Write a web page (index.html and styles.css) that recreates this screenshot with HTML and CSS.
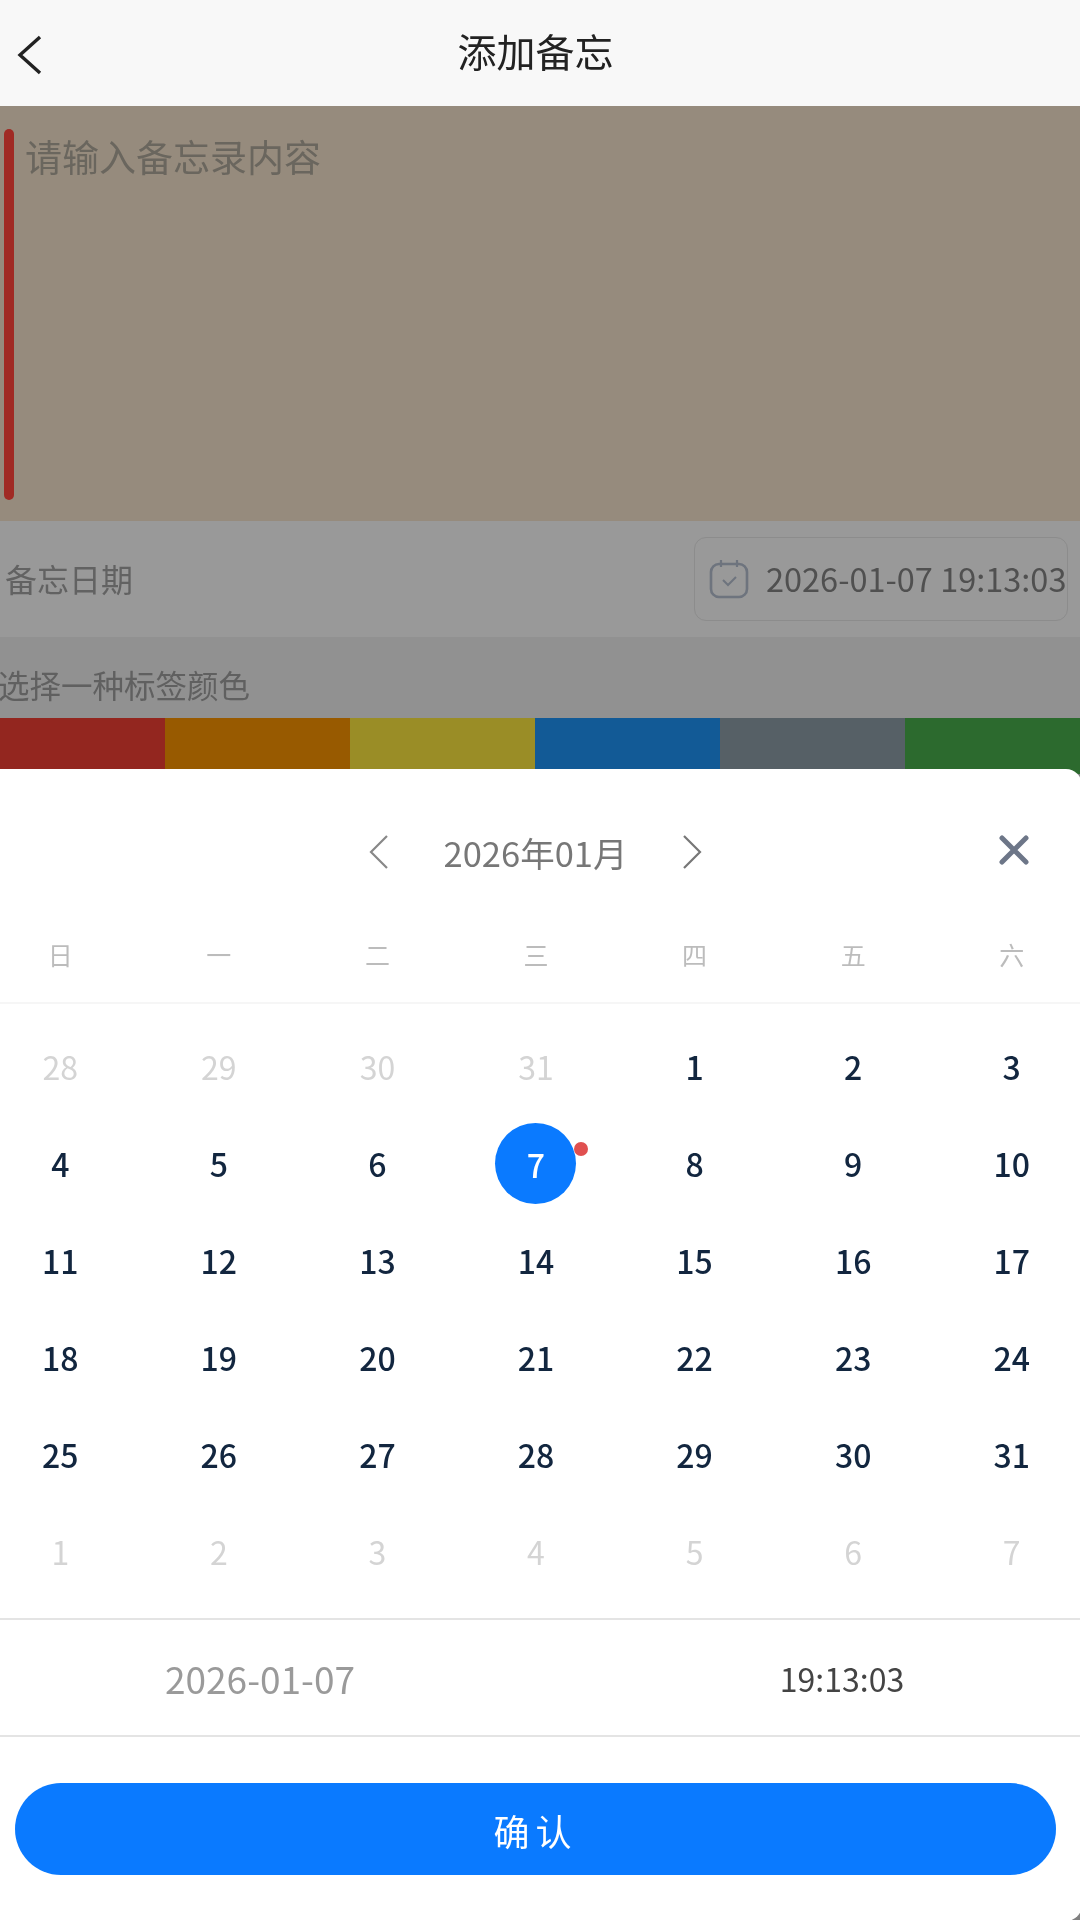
FILE: index.html
```html
<!DOCTYPE html>
<html lang="zh-CN">
<head>
<meta charset="utf-8">
<title>添加备忘</title>
<link rel="stylesheet" href="styles.css">
</head>
<body>
<div class="page">
  <header class="topbar">
    <svg class="back" viewBox="0 0 26 40" width="26" height="40"><path d="M23 2 3 20l20 18" fill="none" stroke="#222" stroke-width="3.4"/></svg>
    <h1 class="title">添加备忘</h1>
  </header>
  <section class="editor">
    <div class="accent"></div>
    <div class="placeholder">请输入备忘录内容</div>
  </section>
  <section class="date-row">
    <span class="date-label">备忘日期</span>
    <div class="date-box">
      <svg class="cal" viewBox="0 0 40 40" width="40" height="40"><rect x="2" y="5" width="36" height="33" rx="8" fill="none" stroke="#6e747e" stroke-width="2.6"/><path d="M12 1v7M28 1v7" stroke="#6e747e" stroke-width="2.2" fill="none"/><path d="m14 21 5 5 8-8" stroke="#6e747e" stroke-width="2" fill="none"/></svg>
      <span class="date-value">2026-01-07 19:13:03</span>
    </div>
  </section>
  <section class="tag-head">选择一种标签颜色</section>
  <div class="swatches">
    <div class="sw red"></div><div class="sw orange"></div><div class="sw yellow"></div><div class="sw blue"></div><div class="sw grey"></div><div class="sw green"></div>
  </div>

  <div class="sheet">
    <div class="month-nav">
      <svg class="chev" viewBox="0 0 20 36" width="20" height="36"><path d="M18 2 2 18l16 16" fill="none" stroke="#888" stroke-width="2.2"/></svg>
      <span class="month">2026年01月</span>
      <svg class="chev" viewBox="0 0 20 36" width="20" height="36"><path d="m2 2 16 16L2 34" fill="none" stroke="#777" stroke-width="2.2"/></svg>
      <svg class="close" viewBox="0 0 30 30" width="30" height="30"><path d="m3 3 24 24M27 3 3 27" fill="none" stroke="#6d7688" stroke-width="5" stroke-linecap="round"/></svg>
    </div>
    <div class="weekdays">
      <span>日</span><span>一</span><span>二</span><span>三</span><span>四</span><span>五</span><span>六</span>
    </div>
    <div class="days">
      <span class="day off">28</span><span class="day off">29</span><span class="day off">30</span><span class="day off">31</span><span class="day">1</span><span class="day">2</span><span class="day">3</span>
      <span class="day">4</span><span class="day">5</span><span class="day">6</span><span class="day today"><span class="disc">7</span><i class="dot"></i></span><span class="day">8</span><span class="day">9</span><span class="day">10</span>
      <span class="day">11</span><span class="day">12</span><span class="day">13</span><span class="day">14</span><span class="day">15</span><span class="day">16</span><span class="day">17</span>
      <span class="day">18</span><span class="day">19</span><span class="day">20</span><span class="day">21</span><span class="day">22</span><span class="day">23</span><span class="day">24</span>
      <span class="day">25</span><span class="day">26</span><span class="day">27</span><span class="day">28</span><span class="day">29</span><span class="day">30</span><span class="day">31</span>
      <span class="day off">1</span><span class="day off">2</span><span class="day off">3</span><span class="day off">4</span><span class="day off">5</span><span class="day off">6</span><span class="day off">7</span>
    </div>
    <div class="picked">
      <span class="picked-date">2026-01-07</span>
      <span class="picked-time">19:13:03</span>
    </div>
    <div class="actions"><button class="confirm">确认</button></div>
  </div>
</div>
</body>
</html>
```
FILE: styles.css
```css
* { box-sizing: border-box; }
html, body { margin: 0; padding: 0; }
body { font-family: "Noto Sans CJK SC", "Noto Sans", sans-serif; background: #fff; }
.page { position: relative; width: 1080px; height: 1920px; overflow: hidden; background: #808080; filter: blur(0.6px); }

.topbar { position: relative; height: 106px; background: #f8f8f8; display: flex; align-items: center; justify-content: center; padding: 0 9px 5px 0; }
.back { position: absolute; left: 17px; top: 35px; }
.title { margin: 0; font-size: 39px; font-weight: 400; color: #222; line-height: 1; }

.editor { height: 415px; background: #968b7d; padding: 23px 0 0 4px; display: flex; gap: 11px; }
.accent { width: 10px; height: 371px; border-radius: 5px; background: #a02a24; }
.placeholder { font-size: 37px; line-height: 54px; color: #6a665e; }

.date-row { height: 116px; background: #999; display: flex; align-items: center; justify-content: space-between; padding: 0 12px 0 5px; }
.date-label { font-size: 32px; line-height: 44px; margin-top: -2px; color: #626262; }
.date-box { width: 374px; height: 84px; border: 1.5px solid #8c8c8c; border-radius: 12px; display: flex; align-items: center; gap: 17px; padding-left: 14px; }
.cal { flex: none; }
.date-value { font-size: 32.5px; line-height: 44px; margin-top: -3px; color: #505050; white-space: nowrap; }

.tag-head { height: 81px; background: #919191; margin: 0; font-size: 31.5px; line-height: 94px; color: #606060; text-indent: -2px; }

.swatches { display: flex; width: 1110px; height: 56px; margin-left: -20px; }
.sw { flex: 1; }
.red { background: #93261f; }
.orange { background: #985a00; }
.yellow { background: #9a8d26; }
.blue { background: #125a96; }
.grey { background: #566066; }
.green { background: #2c6a2e; }

.sheet { position: absolute; left: -14px; right: -2px; top: 769px; bottom: -1px; padding: 0 2px 0 14px; background: #fff; border-radius: 16px; }

.month-nav { position: relative; height: 166px; display: flex; align-items: center; justify-content: center; padding: 0 9px 0 0; gap: 55px; }
.chev { flex: none; }
.month { font-size: 34.5px; line-height: 44px; color: #777; white-space: nowrap; }
.close { position: absolute; left: 999px; top: 66px; }

.weekdays { display: grid; grid-template-columns: repeat(7, 1fr); width: 1110px; margin-left: -19px; height: 67px; padding-bottom: 29px; align-items: center; text-align: center; font-size: 25px; color: #bcbcbc; }

.days { display: grid; grid-template-columns: repeat(7, 1fr); grid-auto-rows: 97px; width: 1110px; margin-left: -19px; padding-top: 13.5px; height: 616px; border-top: 2px solid #f6f6f6; }
.day { display: flex; align-items: center; justify-content: center; font-size: 32px; font-weight: 500; color: #12263f; line-height: 1; }
.off { color: #d4d4d4; font-weight: 400; }
.today { position: relative; }
.disc { width: 81px; height: 81px; margin-top: 1.5px; border-radius: 50%; background: #0a7aff; color: #fff; display: flex; align-items: center; justify-content: center; }
.dot { position: absolute; left: 117px; top: 27px; width: 14px; height: 14px; border-radius: 50%; background: #e05050; }

.picked { height: 119px; border-top: 2px solid #e4e4e4; border-bottom: 2px solid #e4e4e4; display: grid; grid-template-columns: 520px 1fr; align-items: center; }
.picked-date { font-size: 37px; color: #9a9a9a; text-align: center; }
.picked-time { font-size: 32px; color: #444; text-align: center; padding-left: 84px; white-space: nowrap; }

.actions { padding: 46px 24px 0 15px; }
.confirm { display: block; width: 100%; height: 92px; border: 0; border-radius: 46px; background: #0a7aff; color: #fff; font-family: inherit; font-size: 36px; letter-spacing: 6px; padding: 2px 0 0 0; }
```
